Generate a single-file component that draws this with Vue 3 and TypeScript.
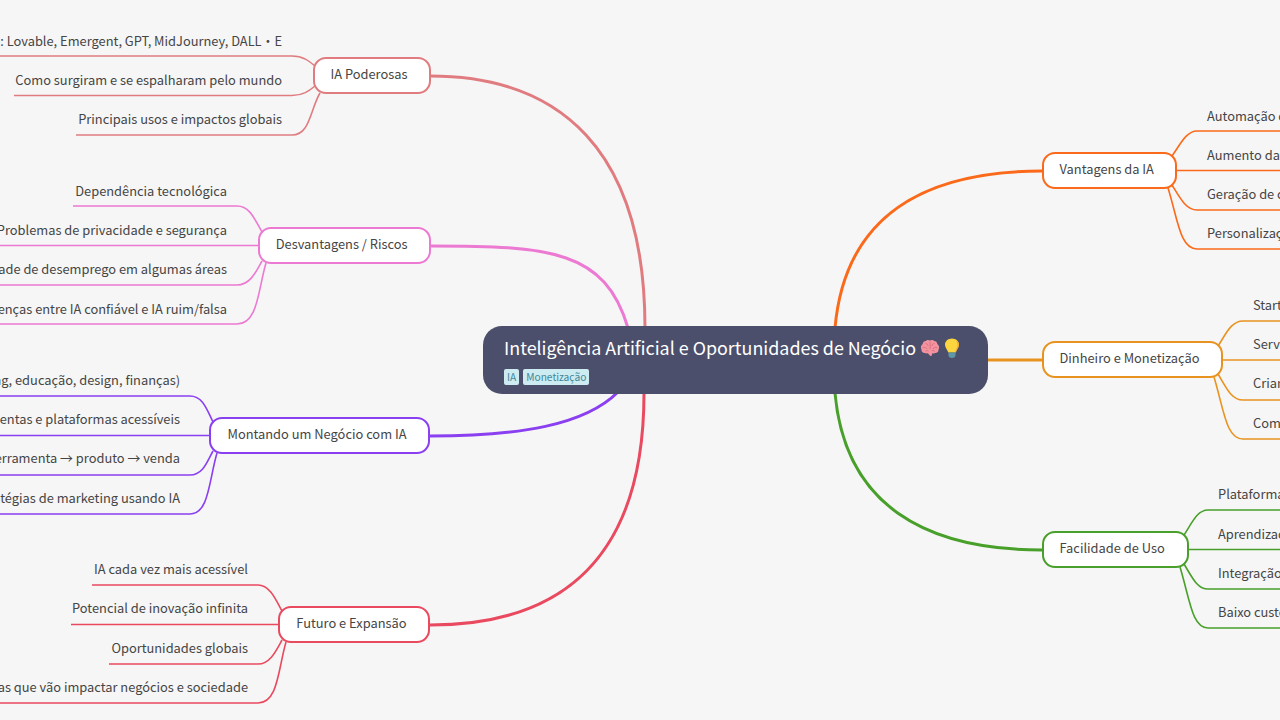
<script setup lang="ts">
interface Leaf { text: string; y: number; line: string }
interface Branch {
  label: string; color: string; left: number; top: number; width: number;
  height: number; main: string; side: 'l' | 'r'; edge: number; leaves: Leaf[];
}
const branches: Branch[] = [
  { label: 'IA Poderosas', color: '#e07c80', left: 313, top: 57, width: 118, height: 37, side: 'l', edge: 282,
    main: 'M430 76 C560 76 645 150 645 328',
    leaves: [
      { text: 'O que são: Lovable, Emergent, GPT, MidJourney, DALL・E', y: 41, line: 'M0 56 H292 C303 56 309 61 315 66' },
      { text: 'Como surgiram e se espalharam pelo mundo', y: 80, line: 'M14 95.5 H292 C303 95.5 309 91 315 86' },
      { text: 'Principais usos e impactos globais', y: 119, line: 'M76 135 H292 C310 135 310 110 320 93' },
    ] },
  { label: 'Desvantagens / Riscos', color: '#ec7ad2', left: 258, top: 227, width: 173, height: 37, side: 'l', edge: 227,
    main: 'M430 246 C550 246 605 250 628 328',
    leaves: [
      { text: 'Dependência tecnológica', y: 191, line: 'M73 206 H237 C250 206 255 220 262 232' },
      { text: 'Problemas de privacidade e segurança', y: 230, line: 'M0 245.5 H258' },
      { text: 'Possibilidade de desemprego em algumas áreas', y: 269, line: 'M0 285 H237 C250 285 256 272 262 261' },
      { text: 'Diferenças entre IA confiável e IA ruim/falsa', y: 309, line: 'M0 324 H237 C258 324 258 290 266 263' },
    ] },
  { label: 'Montando um Negócio com IA', color: '#8a3ff0', left: 209, top: 417, width: 221, height: 37, side: 'l', edge: 180,
    main: 'M430 436 C520 436 585 425 618 392',
    leaves: [
      { text: 'Setores (marketing, educação, design, finanças)', y: 380, line: 'M0 396 H190 C203 396 207 410 213 422' },
      { text: 'Ferramentas e plataformas acessíveis', y: 419, line: 'M0 435.5 H209' },
      { text: 'Ideia → ferramenta → produto → venda', y: 458, line: 'M0 475 H190 C203 475 207 462 213 451' },
      { text: 'Estratégias de marketing usando IA', y: 498, line: 'M0 514 H190 C209 514 209 480 217 453' },
    ] },
  { label: 'Futuro e Expansão', color: '#e94a5f', left: 278, top: 606, width: 152, height: 37, side: 'l', edge: 248,
    main: 'M430 625 C560 625 644 560 644 393',
    leaves: [
      { text: 'IA cada vez mais acessível', y: 569, line: 'M92 585 H258 C270 585 276 600 282 611' },
      { text: 'Potencial de inovação infinita', y: 608, line: 'M71 624.5 H278' },
      { text: 'Oportunidades globais', y: 648, line: 'M109 664 H258 C270 664 276 651 282 640' },
      { text: 'Tendências futuras que vão impactar negócios e sociedade', y: 687, line: 'M0 703 H258 C278 703 278 670 286 642' },
    ] },
  { label: 'Vantagens da IA', color: '#fb6a1a', left: 1042, top: 152, width: 135, height: 37, side: 'r', edge: 1207,
    main: 'M1042 171 C925 171 845 215 835 328',
    leaves: [
      { text: 'Automação de processos', y: 116, line: 'M1172 156 C1180 145 1186 131 1197 131 H1280' },
      { text: 'Aumento da produtividade', y: 155, line: 'M1177 170.5 H1280' },
      { text: 'Geração de conteúdo', y: 194, line: 'M1172 185 C1180 198 1186 210 1197 210 H1280' },
      { text: 'Personalização de serviços', y: 233, line: 'M1168 188 C1178 220 1180 249 1197 249 H1280' },
    ] },
  { label: 'Dinheiro e Monetização', color: '#e8931f', left: 1042, top: 341, width: 181, height: 37, side: 'r', edge: 1253,
    main: 'M988 360 H1043',
    leaves: [
      { text: 'Startups de IA', y: 305, line: 'M1218 346 C1226 334 1231 321 1243 321 H1280' },
      { text: 'Serviços com IA', y: 344, line: 'M1223 360 H1280' },
      { text: 'Criando produtos', y: 383, line: 'M1218 374 C1226 387 1231 400 1243 400 H1280' },
      { text: 'Comissões e afiliados', y: 423, line: 'M1214 377 C1224 410 1226 439 1243 439 H1280' },
    ] },
  { label: 'Facilidade de Uso', color: '#48a02b', left: 1042, top: 531, width: 147, height: 37, side: 'r', edge: 1218,
    main: 'M1042 550 C925 550 845 505 835 393',
    leaves: [
      { text: 'Plataformas no-code', y: 494, line: 'M1184 535 C1192 523 1197 510 1208 510 H1280' },
      { text: 'Aprendizado rápido', y: 534, line: 'M1189 549.5 H1280' },
      { text: 'Integração simples', y: 573, line: 'M1184 564 C1192 577 1197 589 1208 589 H1280' },
      { text: 'Baixo custo inicial', y: 612, line: 'M1180 567 C1190 600 1192 628 1208 628 H1280' },
    ] },
];

function branchBox(b: Branch) {
  return { left: `${b.left}px`, top: `${b.top}px`, width: `${b.width}px`, height: `${b.height}px`, borderColor: b.color };
}
function leafPos(b: Branch, l: Leaf) {
  return b.side === 'l'
    ? { right: `${1280 - b.edge}px`, top: `${l.y - 12}px` }
    : { left: `${b.edge}px`, top: `${l.y - 12}px` };
}
</script>

<template>
  <div class="canvas">
    <svg class="wires" width="1280" height="720" viewBox="0 0 1280 720" fill="none">
      <g v-for="b in branches" :key="b.label" :stroke="b.color">
        <path :d="b.main" stroke-width="3" />
        <path v-for="l in b.leaves" :key="l.text" :d="l.line" stroke-width="1.6" />
      </g>
    </svg>

    <template v-for="b in branches" :key="b.label">
      <div class="branch" :class="b.side === 'l' ? 'on-left' : 'on-right'" :style="branchBox(b)">{{ b.label }}</div>
      <div v-for="l in b.leaves" :key="l.text" class="leaf" :style="leafPos(b, l)">{{ l.text }}</div>
    </template>

    <div class="root">
      <div class="title">
        <span>Inteligência Artificial e Oportunidades de Negócio</span>
        <svg class="emoji" width="22" height="20" viewBox="0 0 22 20">
          <path d="M11 2.500C9.500 1.500 7.500 1.800 6.800 3 5 3 3.500 4.500 3.800 6 2 7 1.200 9.500 2.500 11.500 2.200 13.500 3.800 15 5.800 15 7 15.500 8 15.500 9 15.300 10 16.500 10.500 18 12 18 13 18 13 16 13.200 15.200 14.500 15.500 15.500 15.500 16.200 15 18.200 15 19.800 13.500 19.500 11.500 20.800 9.500 20 7 18.200 6 18.500 4.500 17 3 15.200 3 14.500 1.800 12.500 1.500 11 2.500Z" fill="#f2939f" />
          <path d="M6.500 5.500C8 5.500 9 6.500 9 8M3.500 9.500C5.500 9 7.500 9.500 8 11M11 3.500C11 6 11.500 8 11 11M15.500 5.500C14 5.500 13 6.500 13 8M18.500 9.500C16.500 9 14.500 9.500 14 11M15.500 13.500C15.500 12.500 14.500 12.500 13 12.500M6.500 13C7.500 12.500 8.500 12.500 9.500 13" stroke="#d96b7c" stroke-width=".8" fill="none" />
        </svg>
        <svg class="emoji bulb" width="18" height="22" viewBox="0 0 18 22">
          <path d="M9 1.500C5 1.500 2 4.300 2 7.800 2 10.800 4.300 12.500 5.300 15.500H12.700C13.700 12.500 16 10.800 16 7.800 16 4.300 13 1.500 9 1.500Z" fill="#fcd53f" />
          <path d="M13 3.500C15 5.500 15 9 13.500 11.500 12.800 12.800 12.500 14 12.200 15.500H12.700C13.700 12.500 16 10.800 16 7.800 16 6 15 4.500 13 3.500Z" fill="#f2a53a" />
          <path d="M5.500 15.500H12.500V18.300C12.500 19.800 11 21 9 21 7 21 5.500 19.800 5.500 18.300Z" fill="#5f97a6" />
        </svg>
      </div>
      <div class="tags">
        <span class="tag">IA</span>
        <span class="tag">Monetização</span>
      </div>
    </div>
  </div>
</template>

<style>
html, body { margin: 0; background: #f6f6f6; }
</style>

<style scoped>
.canvas {
  position: relative;
  width: 1280px;
  height: 720px;
  overflow: hidden;
  background: #f6f6f6;
  font-family: "Noto Sans CJK JP", "Noto Sans", sans-serif;
  color: #454545;
}
.wires { position: absolute; left: 0; top: 0; }
.branch {
  position: absolute;
  box-sizing: border-box;
  display: flex;
  align-items: center;
  padding-bottom: 3px;
  background: #fff;
  border: 2.500px solid;
  border-radius: 13px;
  font-size: 12.850px;
  line-height: 20px;
  white-space: nowrap;
}
.on-left { justify-content: flex-end; padding-right: 21.500px; }
.on-right { justify-content: flex-start; padding-left: 15.500px; }
.leaf {
  position: absolute;
  font-size: 12.850px;
  line-height: 24px;
  white-space: nowrap;
}
.root {
  position: absolute;
  left: 483px;
  top: 326px;
  box-sizing: border-box;
  width: 505px;
  height: 68px;
  padding: 8px 21px;
  background: #4c4f6b;
  border-radius: 19px;
  color: #fff;
}
.title {
  display: flex;
  align-items: center;
  height: 27px;
  font-size: 17.900px;
  line-height: 27px;
  white-space: nowrap;
}
.emoji { flex: none; margin-left: 3px; }
.bulb { margin-left: 2px; }
.tags { display: flex; gap: 4px; margin-top: 8px; }
.tag {
  padding: 0 3px;
  height: 16px;
  line-height: 16px;
  font-size: 10.200px;
  background: #cdecf2;
  color: #3f8798;
  border-radius: 2px;
}
</style>
